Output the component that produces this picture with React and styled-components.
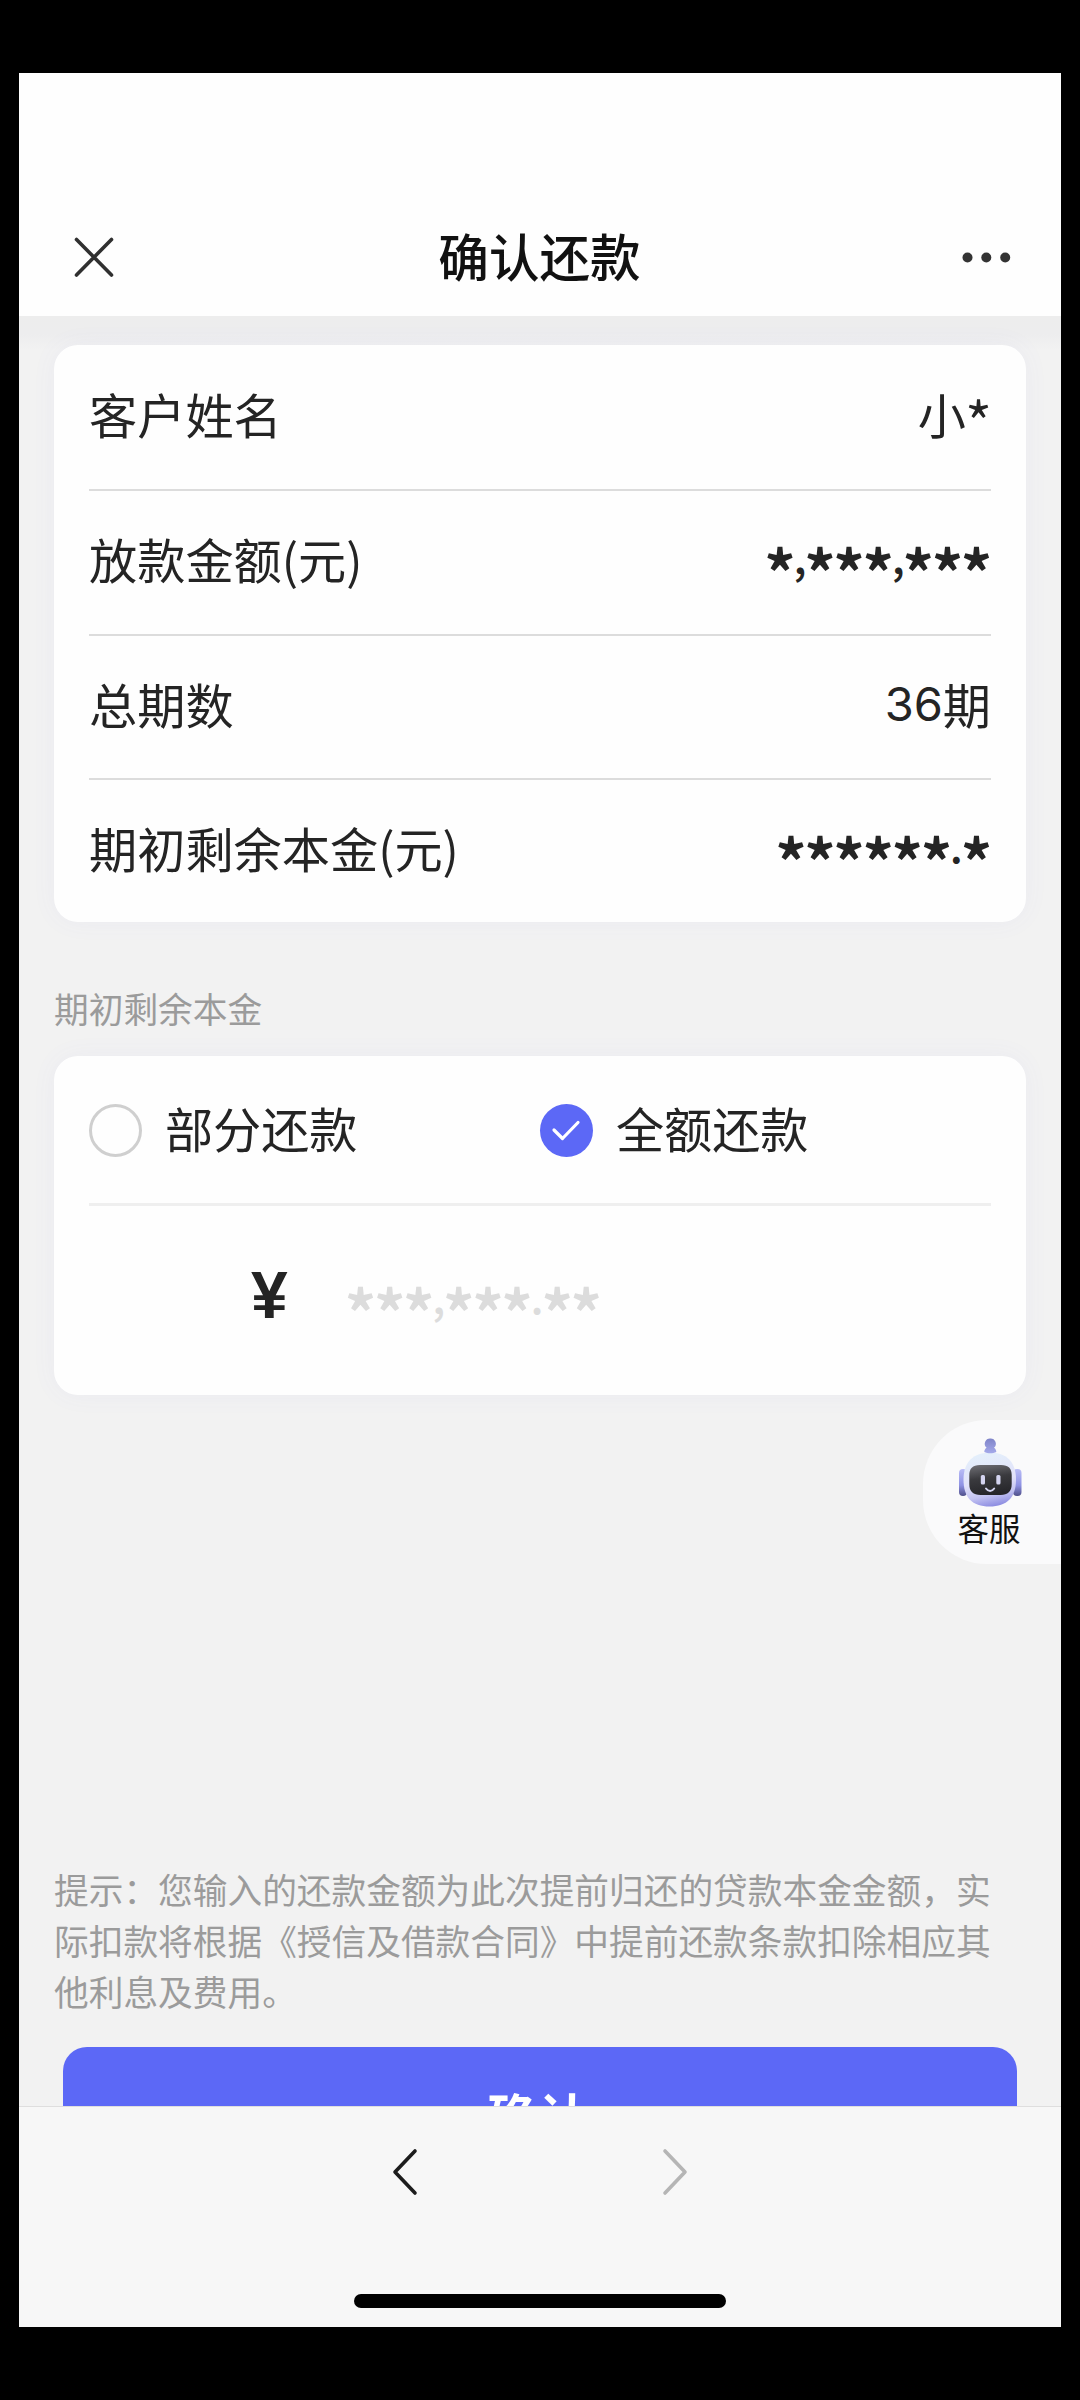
import React from 'react';
import styled, { createGlobalStyle } from 'styled-components';

const Global = createGlobalStyle`
  * { box-sizing: border-box; }
  body { margin: 0; background: #000; }
`;

const cjk = '"Noto Sans CJK SC", sans-serif';

const Stage = styled.div`
  width: 1080px;
  height: 2400px;
  padding: 72.5px 19.5px 73px 18.5px;
  background: #000;
  font-family: ${cjk};
  color: #242424;
`;

const Screen = styled.div`
  position: relative;
  height: 100%;
  display: flex;
  flex-direction: column;
  overflow: hidden;
  background: #f1f1f1;
`;

const Header = styled.header`
  flex: none;
  height: 243.5px;
  padding: 125px 49px 0 53px;
  display: flex;
  align-items: flex-start;
  justify-content: space-between;
  background: #fefefe;
`;

const HeaderIcon = styled.svg`
  display: block;
  width: 44px;
  height: 44px;
  margin-top: 37px;
`;

const MoreIcon = styled(HeaderIcon)`
  width: 54px;
`;

const Title = styled.h1`
  margin: 20px 0 0 6px;
  font-size: 50.6px;
  line-height: 74px;
  font-weight: 500;
  color: #111;
`;

const Body = styled.main`
  flex: 1;
  min-height: 0;
  overflow: hidden;
  padding: 29px 35px 0 35.5px;
  display: flex;
  flex-direction: column;
  background: linear-gradient(#ededed, #ededee 18px, #f2f2f2 34px);
`;

const Card = styled.section`
  flex: none;
  padding: 0 34.5px 0 35px;
  border-radius: 24px;
  background: #fefefe;
  box-shadow: 0 0 26px rgba(90, 90, 220, 0.05);
`;

const Row = styled.div`
  height: 144.25px;
  display: flex;
  align-items: center;
  justify-content: space-between;
  padding-bottom: 8px;
  font-size: 48.2px;
  line-height: 70px;
  & + & { border-top: 2.5px solid #dcdcdc; }
`;

const Value = styled.span`
  display: flex;
  align-items: center;
  height: 70px;
`;

const Digits = styled.span`
  padding-top: 3px;
  font-family: Inter, ${cjk};
  font-size: 47px;
`;

const Star = styled.span`
  display: flex;
  justify-content: center;
  width: ${(p) => (p.$light ? 25 : 29.1)}px;
  padding-top: ${(p) => (p.$light ? 15 : 24)}px;
  font-size: ${(p) => (p.$light ? 60 : 62)}px;
  font-weight: ${(p) => (p.$light ? 350 : 700)};
  line-height: 60px;
`;

const Mark = styled.span`
  display: flex;
  justify-content: center;
  width: 11px;
  padding-bottom: 6px;
  font-size: 44px;
  font-weight: 500;
  line-height: 64px;
`;

const SectionLabel = styled.h2`
  flex: none;
  margin: 61px 0 23px;
  font-size: 34.7px;
  line-height: 50px;
  font-weight: 400;
  color: #9b9b9b;
`;

const Options = styled.div`
  height: 147px;
  padding-top: 1.5px;
  display: grid;
  grid-template-columns: 1fr 1fr;
  align-items: center;
`;

const Option = styled.div`
  display: flex;
  align-items: center;
  gap: 23px;
  font-size: 48.1px;
  line-height: 70px;
`;

const OptionText = styled.span`
  margin-top: -7px;
`;

const Radio = styled.span`
  flex: none;
  width: 53px;
  height: 53px;
  border-radius: 50%;
  display: flex;
  align-items: center;
  justify-content: center;
  border: ${(p) => (p.$on ? 'none' : '3px solid #cfcfcf')};
  background: ${(p) => (p.$on ? '#5c68f6' : 'transparent')};
`;

const CheckIcon = styled.svg`
  display: block;
  width: 30px;
  height: 24px;
  margin-right: 2px;
`;

const Amount = styled.div`
  height: 192px;
  border-top: 3px solid #efefef;
  padding: 0 0 12px 162px;
  display: flex;
  align-items: center;
`;

const Currency = styled.span`
  width: 95px;
  font: 700 66px/90px "Liberation Sans", sans-serif;
`;

const AmountMask = styled(Value)`
  color: #dcdcdc;
  margin-top: 6px;
`;

const Tip = styled.p`
  flex: none;
  width: 945px;
  margin: 468.5px 0 0;
  font-size: 34.7px;
  line-height: 51px;
  color: #9b9b9b;
`;

const Confirm = styled.button`
  flex: none;
  height: 140px;
  margin: 30.5px 9px 0;
  padding: 0 3px 5px 0;
  border: 0;
  border-radius: 24px;
  background: #5c68f6;
  color: #fff;
  font: 700 51px/74px ${cjk};
`;

const BottomBar = styled.footer`
  flex: none;
  height: 221px;
  display: flex;
  flex-direction: column;
  align-items: center;
  justify-content: space-between;
  padding: 40px 0 19.5px;
  border-top: 1.5px solid #dedede;
  background: #f7f7f7;
`;

const NavIcons = styled.div`
  display: flex;
  gap: 238px;
`;

const Chevron = styled.svg`
  display: block;
  width: 32px;
  height: 50px;
`;

const HomeIndicator = styled.div`
  width: 372px;
  height: 14px;
  border-radius: 7px;
  background: #000;
`;

const Service = styled.aside`
  position: absolute;
  right: 0;
  top: 1347.5px;
  width: 138px;
  height: 144px;
  padding: 17px 3px 0 0;
  display: flex;
  flex-direction: column;
  align-items: center;
  border-radius: 64px 0 0 64px;
  background: #fafafb;
`;

const Robot = styled.svg`
  display: block;
  width: 64px;
  height: 70px;
`;

const ServiceText = styled.span`
  margin: -2px 2px 0 0;
  font-size: 31.5px;
  line-height: 44px;
  color: #111;
`;

const Masked = ({ text }) =>
  [...text].map((ch, i) => (ch === '*' ? <Star key={i}>*</Star> : <Mark key={i}>{ch}</Mark>));

const rows = [
  { label: '客户姓名', value: <>小<Star $light>*</Star></> },
  { label: '放款金额(元)', value: <Masked text="*,***,***" /> },
  { label: '总期数', value: <><Digits>36</Digits>期</> },
  { label: '期初剩余本金(元)', value: <Masked text="******.*" /> },
];

export default function App() {
  return (
    <Stage>
      <Global />
      <Screen>
        <Header>
          <HeaderIcon viewBox="0 0 44 44" fill="none" stroke="#303030" strokeWidth="3.6" strokeLinecap="round">
            <path d="M4.5 4.5 39.5 40M39.5 4.5 4.5 40" />
          </HeaderIcon>
          <Title>确认还款</Title>
          <MoreIcon viewBox="0 0 54 44" fill="#333">
            <circle cx="10.500" cy="22.500" r="5" />
            <circle cx="29.300" cy="22.500" r="5" />
            <circle cx="48.200" cy="22.500" r="5" />
          </MoreIcon>
        </Header>
        <Body>
          <Card>
            {rows.map(({ label, value }) => (
              <Row key={label}>
                <span>{label}</span>
                <Value>{value}</Value>
              </Row>
            ))}
          </Card>
          <SectionLabel>期初剩余本金</SectionLabel>
          <Card>
            <Options>
              <Option>
                <Radio />
                <OptionText>部分还款</OptionText>
              </Option>
              <Option>
                <Radio $on>
                  <CheckIcon viewBox="0 0 30 24" fill="none" stroke="#fff" strokeWidth="3.2" strokeLinecap="round" strokeLinejoin="round">
                    <path d="M3 12 11.500 20.500 27 4.500" />
                  </CheckIcon>
                </Radio>
                <OptionText>全额还款</OptionText>
              </Option>
            </Options>
            <Amount>
              <Currency>¥</Currency>
              <AmountMask><Masked text="***,***.**" /></AmountMask>
            </Amount>
          </Card>
          <Tip>提示：您输入的还款金额为此次提前归还的贷款本金金额，实际扣款将根据《授信及借款合同》中提前还款条款扣除相应其他利息及费用。</Tip>
          <Confirm>确认</Confirm>
        </Body>
        <BottomBar>
          <NavIcons>
            <Chevron viewBox="0 0 32 50" fill="none" stroke="#1c1c1c" strokeWidth="3.6" strokeLinecap="round" strokeLinejoin="round">
              <path d="M26 4 6 25 26 46" />
            </Chevron>
            <Chevron viewBox="0 0 32 50" fill="none" stroke="#b5b5b5" strokeWidth="3.6" strokeLinecap="round" strokeLinejoin="round">
              <path d="M6 4 26 25 6 46" />
            </Chevron>
          </NavIcons>
          <HomeIndicator />
        </BottomBar>
        <Service>
          <Robot viewBox="0 0 64 70">
            <defs>
              <linearGradient id="head" x1="0.3" y1="0" x2="0.5" y2="1">
                <stop offset="0" stopColor="#e4f0fb" />
                <stop offset="0.55" stopColor="#e2e2fa" />
                <stop offset="0.8" stopColor="#c3c3f2" />
                <stop offset="1" stopColor="#8f8fe2" />
              </linearGradient>
              <linearGradient id="ear" x1="0" y1="0" x2="0" y2="1">
                <stop offset="0" stopColor="#b9bcf6" />
                <stop offset="0.6" stopColor="#8f92e4" />
                <stop offset="1" stopColor="#50508a" />
              </linearGradient>
              <linearGradient id="face" x1="0.2" y1="0" x2="0.4" y2="1">
                <stop offset="0" stopColor="#6c6c72" />
                <stop offset="0.45" stopColor="#3a3a3e" />
                <stop offset="1" stopColor="#26262a" />
              </linearGradient>
              <linearGradient id="antenna" x1="0" y1="0" x2="0" y2="1">
                <stop offset="0" stopColor="#7f84c8" />
                <stop offset="1" stopColor="#a4a9ea" />
              </linearGradient>
            </defs>
            <rect x="1" y="32" width="8" height="27" rx="4" fill="url(#ear)" />
            <rect x="55" y="32" width="8.500" height="27" rx="4" fill="url(#ear)" />
            <path d="M32 15.500c16 0 26 9 26 27 0 18-9 27-26.500 27S5.500 60.500 5.500 42.500c0-18 10.500-27 26.500-27z" fill="url(#head)" />
            <path d="M32.300 1.500a5.300 5.300 0 0 1 3.700 9.300c1.600 1 2.300 2.700 2.300 4.200-3.500 1.700-8.500 1.700-12 0 0-1.500.7-3.200 2.300-4.200a5.300 5.300 0 0 1 3.700-9.300z" fill="url(#antenna)" />
            <path d="M22 28h21c7.500 0 10.700 3.500 10.700 10v9c0 7.500-4 11-11 11h-20c-7.500 0-11.400-3.500-11.400-11v-8.500C11.300 31.500 14.500 28 22 28z" fill="url(#face)" />
            <rect x="22.800" y="38" width="4.200" height="9.500" rx="1.500" fill="#d4d4f0" />
            <rect x="38.300" y="38" width="4.200" height="9.500" rx="1.500" fill="#d4d4f0" />
            <path d="M28 51.500c2.200 3.200 6 3.200 8.200 0" fill="none" stroke="#d4d4f0" strokeWidth="2" strokeLinecap="round" />
          </Robot>
          <ServiceText>客服</ServiceText>
        </Service>
      </Screen>
    </Stage>
  );
}
